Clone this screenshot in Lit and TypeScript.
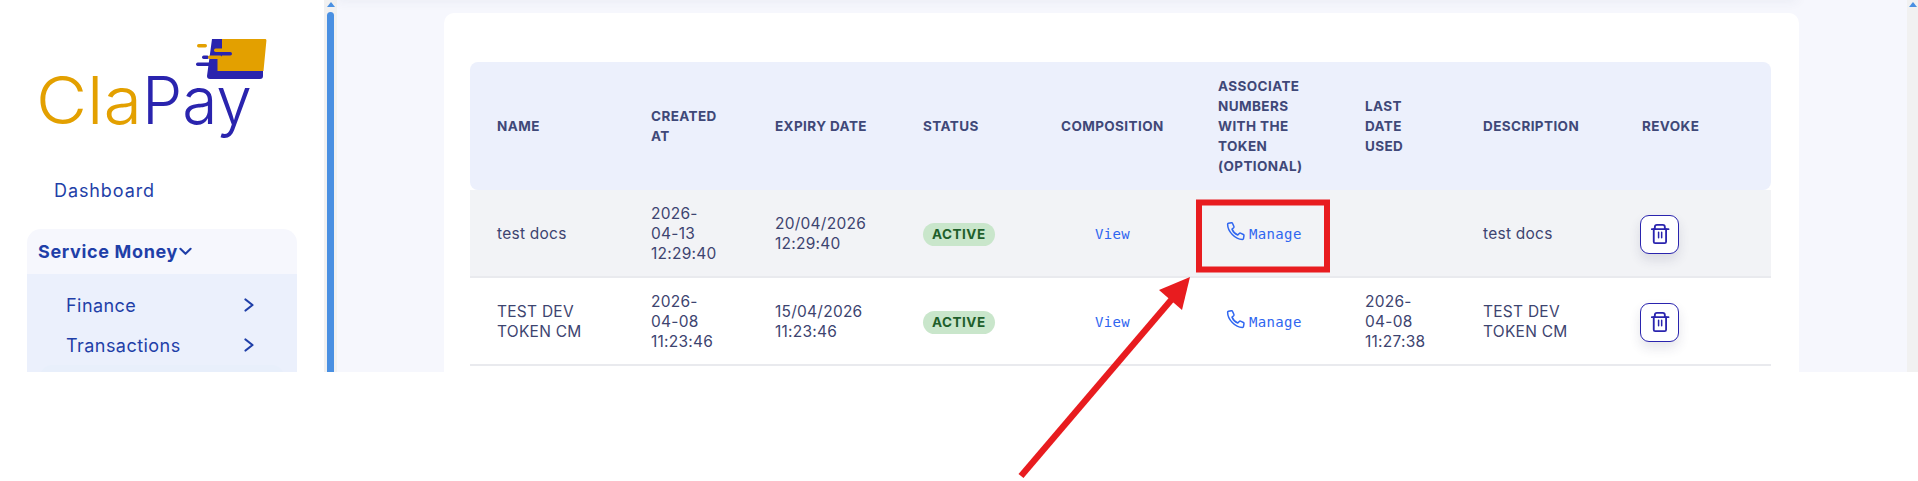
import { LitElement, html, css, svg } from "lit";
import { customElement } from "lit/decorators.js";

const phone = html`<svg class="phone" viewBox="0 0 24 24" fill="none" stroke="currentColor" stroke-width="1.7" stroke-linejoin="round" stroke-linecap="round"><path d="M4 2.600 7.300 2c.6-.1 1.100.2 1.300.7l1.600 3.600c.2.500.1 1-.3 1.400L8 9.300c1 2.600 3.600 5.400 6.600 6.700l1.700-1.800c.4-.4.900-.5 1.400-.3l3.300 1.500c.6.300.8.800.7 1.400l-.6 3.300c-.1.600-.6 1-1.200 1C11.500 20.800 3 12 3 3.700c0-.5.400-1 1-1.100Z"/></svg>`;
const trash = html`<svg class="trash" viewBox="0 0 24 24" fill="none" stroke="currentColor" stroke-width="2.200" stroke-linejoin="round" stroke-linecap="round"><path d="M2.200 6.200h20"/><path d="M5.800 6.200V3.600c0-1.500 1-2.500 2.500-2.500h7c1.500 0 2.500 1 2.500 2.500v2.600"/><path d="M4.500 6.200v15c0 1 .7 1.700 1.700 1.700h11.400c1 0 1.700-.7 1.700-1.700v-15"/><path d="M10.300 10v6.400M14 10v6.400" stroke-width="1.800"/></svg>`;
const right = html`<svg class="chev" viewBox="0 0 14 14"><path d="M2.500 1.500 9.500 7 2.500 12.500" /></svg>`;

const headers: string[][] = [
  ["NAME"], ["CREATED", "AT"], ["EXPIRY DATE"], ["STATUS"], ["COMPOSITION"],
  ["ASSOCIATE", "NUMBERS", "WITH THE", "TOKEN", "(OPTIONAL)"],
  ["LAST", "DATE", "USED"], ["DESCRIPTION"], ["REVOKE"],
];

const rows = [
  { name: ["test docs"], created: ["2026-", "04-13", "12:29:40"], expiry: ["20/04/2026", "12:29:40"], last: [] as string[], desc: ["test docs"], alt: true },
  { name: ["TEST DEV", "TOKEN CM"], created: ["2026-", "04-08", "11:23:46"], expiry: ["15/04/2026", "11:23:46"], last: ["2026-", "04-08", "11:27:38"], desc: ["TEST DEV", "TOKEN CM"], alt: false },
];

const lines = (l: string[]) => l.map((t, i) => html`${i ? html`<br />` : ""}${t}`);

@customElement("app-root")
export class AppRoot extends LitElement {
  static styles = css`
    :host { display: block; position: relative; width: 1918px; height: 481px; overflow: hidden; background: #fff; font-family: "Inter", "Liberation Sans", sans-serif; }
    .shell { display: flex; height: 372px; overflow: hidden; }
    .side { width: 324px; flex: none; background: #fff; padding-top: 36px; box-sizing: border-box; }
    .logo { display: block; margin-left: 33px; width: 246px; height: 104px; }
    .logo text { font-family: "Inter", sans-serif; font-weight: 300; font-size: 66px; }
    .dash { margin: 39px 0 0 54px; font-size: 18px; line-height: 24px; color: #1f3fa8; letter-spacing: .9px; }
    .group { margin: 26px 27px 0; }
    .group-head { height: 45px; background: #f6f7fd; border-radius: 14px 14px 0 0; display: flex; align-items: center; padding-left: 11px; gap: 1px; color: #1f3fa8; font-weight: 700; font-size: 18px; letter-spacing: .65px; }
    .group-head .chev { width: 13px; height: 13px; }
    .chev { width: 14px; height: 14px; flex: none; fill: none; stroke: currentColor; stroke-width: 2.200; stroke-linecap: round; stroke-linejoin: round; }
    .sub { background: #ebf0fc; padding: 11px 13px 0; height: 90px; }
    .sub-item { display: flex; align-items: center; justify-content: space-between; height: 40px; padding: 0 27px 0 26px; color: #1f3fa8; font-size: 18px; letter-spacing: .45px; }
    .sub-next { height: 20px; background: #e8effb; border-radius: 12px 12px 0 0; }
    .bar { width: 13px; flex: none; background: #f1f1f1; }
    .bar-up { width: 0; height: 0; border-left: 4px solid transparent; border-right: 4px solid transparent; border-bottom: 5px solid #4a90e2; margin: 2px 0 0 3px; }
    .bar-thumb { width: 7px; margin: 5px 0 0 3px; height: 400px; border-radius: 4px; background: #4a90e2; }
    .main { flex: 1; background: #f6f7fd; position: relative; padding: 13px 108px 0 107px; min-width: 0; }
    .main::before { content: ""; position: absolute; left: 0; right: 110px; top: -6px; height: 6px; box-shadow: 0 0 12px rgba(60, 70, 110, .1); }
    .card { background: #fff; border-radius: 10px; padding: 49px 27px 20px 26px; }
    table { border-collapse: separate; border-spacing: 0; table-layout: fixed; width: 1301px; color: #3d4470; }
    col.c1 { width: 154px; } col.c2 { width: 124px; } col.c3 { width: 148px; } col.c4 { width: 138px; } col.c5 { width: 157px; } col.c6 { width: 147px; } col.c7 { width: 118px; } col.c8 { width: 159px; } col.c9 { width: 156px; }
    th { background: #ecf0fc; height: 128px; padding: 0 0 0 27px; text-align: left; font-size: 13.500px; line-height: 20px; font-weight: 700; letter-spacing: .4px; color: #3f4878; }
    th:first-child { border-radius: 8px 0 0 8px; }
    th:last-child { border-radius: 0 8px 8px 0; }
    td { height: 88px; box-sizing: border-box; padding: 2px 0 0 27px; font-size: 15.500px; line-height: 20px; border-bottom: 2px solid #e9eaee; letter-spacing: .25px; vertical-align: middle; }
    tr.alt td { background: #f2f3f6; }
    .badge { display: inline-block; background: #c9e6cb; color: #1f5f2b; font-weight: 700; font-size: 13.500px; line-height: 23px; padding: 0 9px; border-radius: 12px; letter-spacing: .5px; }
    .mono { font-family: "DejaVu Sans Mono", "Liberation Mono", monospace; font-size: 14px; color: #2f66f0; letter-spacing: .35px; }
    .view { padding-left: 34px; }
    .manage { display: inline-flex; align-items: center; gap: 3px; padding-left: 7px; }
    .manage-label { position: relative; top: 2px; }
    .phone { width: 21px; height: 21px; flex: none; }
    .rev { width: 39px; height: 39px; margin-left: -2px; box-sizing: border-box; display: flex; align-items: center; justify-content: center; background: #fff; border: 1px solid #2a24ae; border-radius: 9px; color: #2a24ae; box-shadow: 0 6px 12px rgba(40, 40, 80, .12); }
    .trash { width: 20px; height: 20px; }
    .sbar { width: 11px; flex: none; background: #f1f1f1; }
    .sbar-up { width: 0; height: 0; border-left: 4px solid transparent; border-right: 4px solid transparent; border-bottom: 5px solid #4a90e2; margin: 2px 0 0 2px; }
    .notes { position: absolute; left: 0; top: 0; width: 1918px; height: 481px; pointer-events: none; }
  `;

  render() {
    return html`
      <div class="shell">
        <aside class="side">
          <svg class="logo" viewBox="-6 0 246 104">
            <path d="M173 3h10v32h41v5c0 2-1 3-3 3H171c-2 0-3-1-3-3Z" fill="#2a24ae" />
            <path d="M183 3h43c1 0 1.500.7 1.400 1.700L224.500 35H178.500V21h4.500Z" fill="#e3a000" />
            <rect x="158" y="8" width="10" height="3.500" rx="1.700" fill="#e3a000" />
            <rect x="175" y="12.500" width="10" height="3.500" rx="1.700" fill="#e3a000" />
            <rect x="176" y="16" width="17" height="3.500" rx="1.700" fill="#2a24ae" />
            <rect x="163" y="19.500" width="7" height="3.500" rx="1.700" fill="#2a24ae" />
            <rect x="169" y="19.500" width="14" height="3.500" rx="1.700" fill="#e3a000" />
            <rect x="157" y="26.500" width="20" height="3.500" rx="1.700" fill="#2a24ae" />
            <text x="-3" y="88" fill="#e3a000" textLength="106" lengthAdjust="spacingAndGlyphs">Cla</text>
            <text x="103" y="88" fill="#2a24ae" textLength="110" lengthAdjust="spacingAndGlyphs">Pay</text>
          </svg>
          <div class="dash">Dashboard</div>
          <div class="group">
            <div class="group-head">Service Money
              <svg class="chev" viewBox="0 0 14 14"><path d="M1.500 4 7 9.500 12.500 4" /></svg>
            </div>
            <div class="sub">
              <div class="sub-item">Finance ${right}</div>
              <div class="sub-item">Transactions ${right}</div>
              <div class="sub-next"></div>
            </div>
          </div>
        </aside>
        <div class="bar"><div class="bar-up"></div><div class="bar-thumb"></div></div>
        <main class="main">
          <section class="card">
            <table>
              <colgroup>
                ${[1, 2, 3, 4, 5, 6, 7, 8, 9].map((n) => html`<col class="c${n}" />`)}
              </colgroup>
              <thead><tr>${headers.map((h) => html`<th>${lines(h)}</th>`)}</tr></thead>
              <tbody>
                ${rows.map((r) => html`
                  <tr class=${r.alt ? "alt" : ""}>
                    <td>${lines(r.name)}</td>
                    <td>${lines(r.created)}</td>
                    <td>${lines(r.expiry)}</td>
                    <td><span class="badge">ACTIVE</span></td>
                    <td><span class="mono view">View</span></td>
                    <td><span class="mono manage">${phone}<span class="manage-label">Manage</span></span></td>
                    <td>${lines(r.last)}</td>
                    <td>${lines(r.desc)}</td>
                    <td><div class="rev">${trash}</div></td>
                  </tr>`)}
              </tbody>
            </table>
          </section>
        </main>
        <div class="sbar"><div class="sbar-up"></div></div>
      </div>
      <svg class="notes" viewBox="0 0 1918 481">
        ${svg`<rect x="1199" y="202.500" width="128" height="67" fill="none" stroke="#e81c1f" stroke-width="6" />
        <path d="M1021 476 1172 299" stroke="#e81c1f" stroke-width="6.500" fill="none" />
        <path d="M1190 277 1159 290 1182 310Z" fill="#e81c1f" />`}
      </svg>
    `;
  }
}
